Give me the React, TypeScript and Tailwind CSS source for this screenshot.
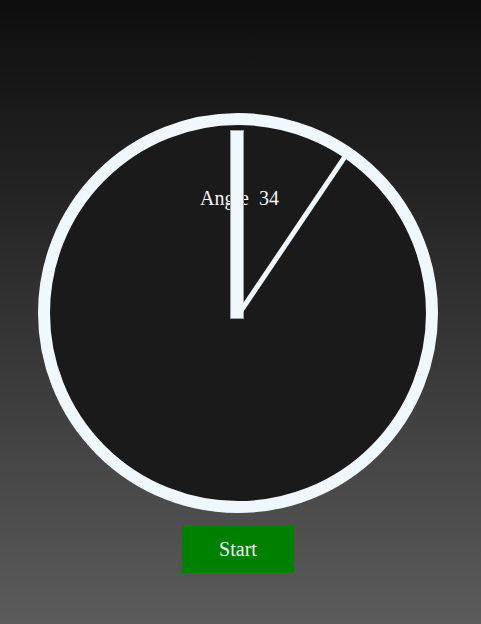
export default function App() {
  const angle = 34;

  return (
    <div
      className="min-h-[624px] w-full bg-gradient-to-b from-[#0e0e0e] to-[#5c5c5c] flex flex-col items-center pt-[113px] pr-[5px]"
      style={{ fontFamily: '"Liberation Serif", "Times New Roman", serif' }}
    >
      {/* Dial */}
      <div className="w-[400px] h-[400px] rounded-full border-[12px] border-[#f0f8ff] bg-[#1a1a1a] relative">
        <div className="absolute left-[150px] top-[63px] text-[20px] leading-[20px] text-[#f5f5f5] whitespace-pre">
          {`Angle  ${angle}`}
        </div>

        {/* Fixed hand */}
        <div className="absolute left-[180px] top-[5px] w-[14px] h-[189px] bg-[#f0f8ff] border border-[#9a9ea3]" />

        {/* Moving hand */}
        <div
          className="absolute left-[187px] top-0 w-[5px] h-[188px] bg-[#f0f8ff] origin-bottom"
          style={{ transform: `rotate(${angle}deg)` }}
        />
      </div>

      <button className="mt-[12px] w-[112px] h-[48px] bg-[#008000] text-[20px] text-[#f5f5f5]">
        Start
      </button>
    </div>
  );
}
